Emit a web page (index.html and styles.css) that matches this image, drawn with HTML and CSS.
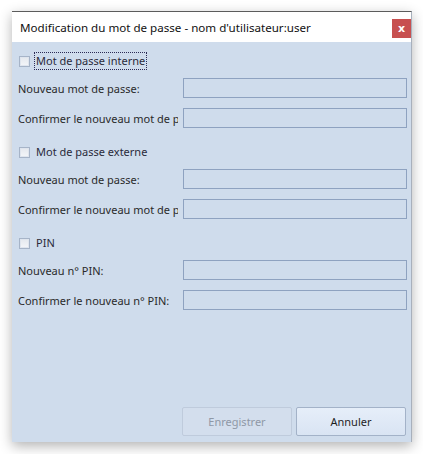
FILE: index.html
```html
<!DOCTYPE html>
<html>
<head>
<meta charset="utf-8">
<link rel="stylesheet" href="styles.css">
</head>
<body>
<div class="dialog">
  <div class="titlebar">
    <span class="title">Modification du mot de passe - nom d'utilisateur:user</span>
    <span class="close">x</span>
  </div>
  <div class="content">
    <div class="check-row"><span class="box"></span><span class="check-label focus">Mot de passe interne</span></div>
    <div class="field"><span class="label">Nouveau mot de passe:</span><span class="input"></span></div>
    <div class="field"><span class="label">Confirmer le nouveau mot de passe:</span><span class="input"></span></div>

    <div class="check-row sec"><span class="box"></span><span class="check-label">Mot de passe externe</span></div>
    <div class="field"><span class="label">Nouveau mot de passe:</span><span class="input"></span></div>
    <div class="field"><span class="label">Confirmer le nouveau mot de passe:</span><span class="input"></span></div>

    <div class="check-row sec"><span class="box"></span><span class="check-label">PIN</span></div>
    <div class="field"><span class="label">Nouveau n° PIN:</span><span class="input"></span></div>
    <div class="field"><span class="label">Confirmer le nouveau n° PIN:</span><span class="input"></span></div>

    <div class="buttons">
      <span class="btn disabled">Enregistrer</span>
      <span class="btn">Annuler</span>
    </div>
  </div>
</div>
</body>
</html>
```
FILE: styles.css
```css
html, body {
  margin: 0;
  padding: 0;
  background: #ffffff;
}
body {
  padding: 11px 11px 12px 12px;
  font-family: "Noto Sans", "Open Sans", sans-serif;
  font-size: 11px;
  color: #1e1e1e;
}
.dialog {
  width: 400px;
  height: 431px;
  box-sizing: border-box;
  display: flex;
  flex-direction: column;
  background: #cfdcec;
  border-top: 1px solid #5c5c5c;
  border-right: 1px solid #a8b0bc;
  box-shadow: 0 4px 12px rgba(0,0,0,0.3);
}
.titlebar {
  height: 30px;
  background: #ffffff;
  display: flex;
  align-items: center;
  justify-content: space-between;
  padding-left: 8px;
}
.title {
  font-size: 11.6px;
  color: #111;
  margin-top: 1px;
}
.close {
  width: 19px;
  height: 19px;
  background: #c75050;
  color: #fff;
  font-weight: bold;
  font-size: 11px;
  display: flex;
  align-items: center;
  justify-content: center;
  margin-top: 3px;
  line-height: 1;
  font-family: "DejaVu Sans", sans-serif;
}
.content {
  flex: 1;
  display: flex;
  flex-direction: column;
  padding: 9px 4px 6px 6px;
}
.check-row {
  height: 20px;
  display: flex;
  align-items: center;
  margin-bottom: 7px;
  padding-left: 1px;
}
.check-row.sec {
  margin-top: 4px;
}
.box {
  width: 11px;
  height: 11px;
  box-sizing: border-box;
  border: 1px solid #a6b4c8;
  background: linear-gradient(#e4e8ee, #f4f6f9);
  box-shadow: inset 0 0 0 1px #dfe5ee;
  margin-right: 4px;
}
.check-label {
  padding: 0 1px 1px 1px;
  border: 1px dotted transparent;
  color: #2a2a3a;
  font-size: 11px;
}
.check-label.focus {
  border-color: #2b2b55;
}
.field {
  display: flex;
  align-items: center;
  height: 20px;
  margin-bottom: 10px;
}
.label {
  width: 160px;
  margin-right: 5px;
  flex: none;
  overflow: hidden;
  white-space: nowrap;
  color: #2a2a2a;
}
.input {
  width: 224px;
  height: 20px;
  box-sizing: border-box;
  border: 1px solid #8ea2c0;
  background: #cfdcec;
}
.buttons {
  margin-top: auto;
  display: flex;
  justify-content: flex-end;
  gap: 4px;
  padding-right: 1px;
}
.btn {
  width: 110px;
  height: 29px;
  box-sizing: border-box;
  border: 1px solid #a3b2c8;
  border-radius: 2px;
  background: linear-gradient(#e6eef9, #d9e4f3);
  display: flex;
  align-items: center;
  justify-content: center;
  color: #1e1e1e;
  font-size: 11px;
}
.btn.disabled {
  background: #d3deed;
  border-color: #bfcbdc;
  color: #8f98a6;
}
```
